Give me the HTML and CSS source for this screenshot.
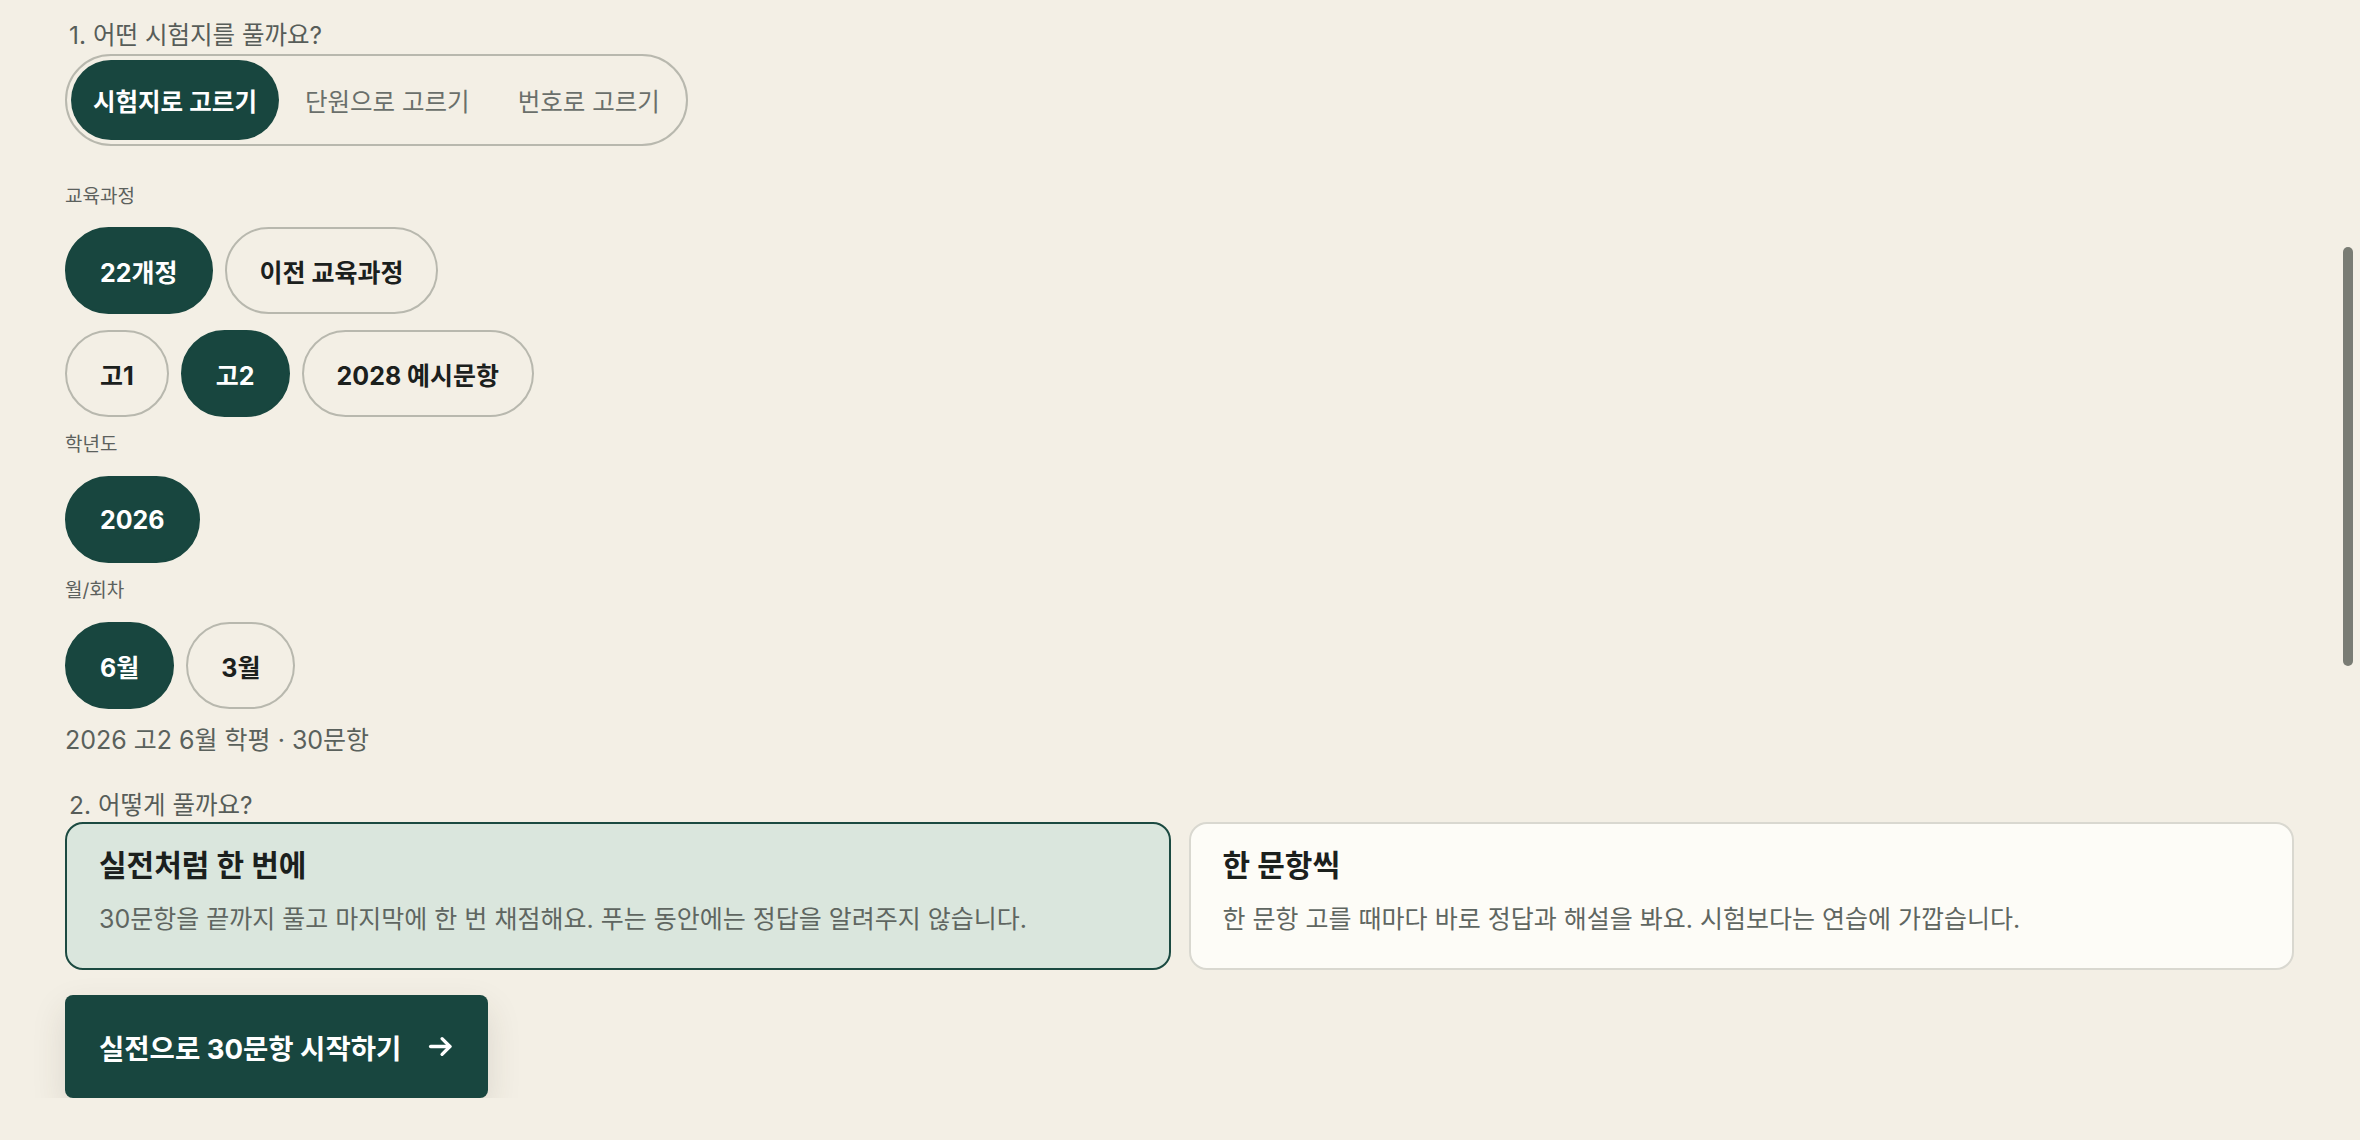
FILE: index.html
```html
<!DOCTYPE html>
<html lang="ko">
<head>
  <meta charset="UTF-8" />
  <meta name="viewport" content="width=device-width, initial-scale=1.0"/>
  <title>시험지 고르기</title>
  <link rel="stylesheet" href="styles.css">
</head>
<body>

  <div class="page">
    <h2 class="step-title">1. 어떤 시험지를 풀까요?</h2>

    <div class="segmented">
      <button class="segment segment-active">시험지로 고르기</button>
      <button class="segment">단원으로 고르기</button>
      <button class="segment">번호로 고르기</button>
    </div>

    <div class="filters">
      <div class="filter-label filter-label-first">교육과정</div>
      <div class="chip-row">
        <button class="chip chip-active">22개정</button>
        <button class="chip">이전 교육과정</button>
      </div>
      <div class="chip-row chip-row-next">
        <button class="chip">고1</button>
        <button class="chip chip-active">고2</button>
        <button class="chip">2028 예시문항</button>
      </div>

      <div class="filter-label">학년도</div>
      <div class="chip-row">
        <button class="chip chip-active">2026</button>
      </div>

      <div class="filter-label">월/회차</div>
      <div class="chip-row">
        <button class="chip chip-active">6월</button>
        <button class="chip">3월</button>
      </div>

      <p class="summary">2026 고2 6월 학평 · 30문항</p>
    </div>

    <h2 class="step-title step-title-second">2. 어떻게 풀까요?</h2>

    <div class="mode-grid">
      <div class="mode-card mode-card-active">
        <div class="mode-title">실전처럼 한 번에</div>
        <div class="mode-desc">30문항을 끝까지 풀고 마지막에 한 번 채점해요. 푸는 동안에는 정답을 알려주지 않습니다.</div>
      </div>
      <div class="mode-card">
        <div class="mode-title">한 문항씩</div>
        <div class="mode-desc">한 문항 고를 때마다 바로 정답과 해설을 봐요. 시험보다는 연습에 가깝습니다.</div>
      </div>
    </div>

    <button class="start-btn">
      <span>실전으로 30문항 시작하기</span>
      <svg class="start-arrow" viewBox="0 0 24 24" width="25" height="25" fill="none" stroke="currentColor" stroke-width="3.2" stroke-linecap="round" stroke-linejoin="round">
        <line x1="2.5" y1="12" x2="21" y2="12"/>
        <polyline points="13.5,4.5 21,12 13.5,19.5"/>
      </svg>
    </button>
  </div>

  <div class="scroll-thumb"></div>

</body>
</html>
```

FILE: styles.css
```css
html {
    overflow: hidden;
}

body {
    font-family: Inter, "Noto Sans CJK KR", sans-serif;
    margin: 0;
    background-color: #f3efe5;
    color: #1b201d;
}

.page {
    display: flex;
    flex-direction: column;
    align-items: flex-start;
    padding: 21px 66px 0 65px;
}

.step-title {
    font-size: 24.5px;
    font-weight: 400;
    line-height: 28px;
    color: #575d59;
    margin: 0 0 5px 4px;
}

.step-title-second {
    margin-top: 36px;
    margin-bottom: 3px;
}

/* segmented control */
.segmented {
    display: inline-flex;
    gap: 4px;
    padding: 4px;
    border: 2px solid #b8b8ae;
    border-radius: 999px;
}

.segment {
    font-family: inherit;
    font-size: 24.5px;
    height: 80px;
    padding: 0 22px;
    border: none;
    border-radius: 999px;
    background: none;
    color: #6a6f6b;
    cursor: pointer;
}

.segment-active {
    background-color: #18463f;
    color: #ffffff;
    font-weight: 600;
}

/* filters */
.filters {
    display: flex;
    flex-direction: column;
    align-items: flex-start;
}

.filter-label {
    font-size: 19px;
    line-height: 24px;
    color: #5c615d;
    margin: 16px 0 19px;
}

.filter-label-first {
    margin-top: 39px;
    margin-bottom: 18px;
}

.chip-row {
    display: flex;
    gap: 12px;
}

.chip-row-next {
    margin-top: 16px;
}

.chip {
    font-family: inherit;
    font-size: 25px;
    font-weight: 700;
    height: 87px;
    padding: 0 33px;
    box-sizing: border-box;
    border: 2px solid #b8b8ae;
    border-radius: 999px;
    background: none;
    color: #1b201d;
    cursor: pointer;
}

.chip-active {
    background-color: #18463f;
    border-color: #18463f;
    color: #ffffff;
}

.summary {
    font-size: 25px;
    line-height: 30px;
    color: #5a615c;
    margin: 16px 0 0;
}

/* mode cards */
.mode-grid {
    display: grid;
    grid-template-columns: 1fr 1fr;
    gap: 18px;
    width: 100%;
}

.mode-card {
    height: 148px;
    box-sizing: border-box;
    padding: 22px 32px 0;
    border: 2px solid #d9d8d0;
    border-radius: 18px;
    background-color: #fdfcf7;
}

.mode-card-active {
    border-color: #1b4a41;
    background-color: #dae6dd;
}

.mode-title {
    font-size: 30px;
    font-weight: 700;
    line-height: 38px;
    color: #1b201d;
}

.mode-desc {
    font-size: 25px;
    line-height: 32px;
    color: #5f6661;
    margin-top: 19px;
}

/* start button */
.start-btn {
    display: flex;
    align-items: center;
    gap: 27px;
    margin-top: 25px;
    height: 103px;
    padding: 0 35px 0 34px;
    border: none;
    border-radius: 8px;
    background-color: #18463f;
    color: #ffffff;
    font-family: inherit;
    font-size: 27.5px;
    font-weight: 700;
    box-shadow: 0 14px 34px rgba(60, 55, 40, 0.13);
    cursor: pointer;
}

.start-arrow {
    display: block;
}

.scroll-thumb {
    position: fixed;
    top: 247px;
    right: 7px;
    width: 10px;
    height: 419px;
    border-radius: 5px;
    background-color: #797c74;
}
```
